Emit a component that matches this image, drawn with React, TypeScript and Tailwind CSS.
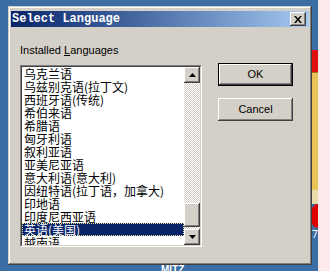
import React from "react";

const items = [
  "乌克兰语",
  "乌兹别克语(拉丁文)",
  "西班牙语(传统)",
  "希伯来语",
  "希腊语",
  "匈牙利语",
  "叙利亚语",
  "亚美尼亚语",
  "意大利语(意大利)",
  "因纽特语(拉丁语，加拿大)",
  "印地语",
  "印度尼西亚语",
  "英语(美国)",
  "越南语",
];

const raised =
  "shadow-[inset_-1px_-1px_#404040,inset_1px_1px_#ffffff,inset_-2px_-2px_#808080,inset_2px_2px_#d4d0c8]";

function Arrow({ up }: { up: boolean }) {
  return (
    <svg width="7" height="4" viewBox="0 0 7 4">
      {up ? <path d="M3.5 0 L7 4 L0 4 Z" fill="#000" /> : <path d="M0 0 L7 0 L3.5 4 Z" fill="#000" />}
    </svg>
  );
}

export default function App() {
  return (
    <div className="w-[330px] h-[271px] flex bg-[#3a6ea5] overflow-hidden">
      <div className="w-[8px] shrink-0" />
      <div className="w-[304px] shrink-0 flex flex-col">
        <div className="h-[6px] shrink-0" />
        <div className="h-[259px] shrink-0 bg-[#d4d0c8] shadow-[inset_-1px_-1px_#404040,inset_1px_1px_#d4d0c8,inset_-2px_-2px_#808080,inset_2px_2px_#ffffff] pt-[5px] px-[3px] flex flex-col">
          <div className="h-[16px] flex items-center justify-between bg-gradient-to-r from-[#0a246a] to-[#a6caf0]">
            <span
              className="pl-[1px] text-white font-bold text-[12px] leading-[16px]"
              style={{ fontFamily: '"Liberation Mono", "DejaVu Sans Mono", monospace' }}
            >
              Select Language
            </span>
            <div className={`mr-[3px] w-[16px] h-[14px] bg-[#d4d0c8] ${raised} flex items-center justify-center`}>
              <svg width="8" height="7" viewBox="0 0 8 7">
                <path d="M0 0 L2 0 L4 2.5 L6 0 L8 0 L5 3.5 L8 7 L6 7 L4 4.5 L2 7 L0 7 L3 3.5 Z" fill="#000" />
              </svg>
            </div>
          </div>
          <div className="flex">
            <div className="ml-[9px] flex flex-col">
              <div
                className="mt-[17px] h-[13px] text-[11px] leading-[13px] text-black"
                style={{ fontFamily: '"Liberation Sans", Arial, sans-serif' }}
              >
                Installed <span className="underline">L</span>anguages
              </div>
              <div className="mt-[8px] w-[182px] h-[182px] border border-t-[#808080] border-l-[#808080] border-b-white border-r-white">
                <div className="w-full h-full border border-t-[#404040] border-l-[#404040] border-b-[#d4d0c8] border-r-[#d4d0c8] bg-white flex">
                  <div
                    className="flex-1 overflow-hidden flex flex-col text-[12px] leading-[13px] text-black"
                    style={{ fontFamily: '"Noto Sans CJK SC", "DejaVu Sans", sans-serif' }}
                  >
                    {items.map((it, i) =>
                      i === 12 ? (
                        <div
                          key={i}
                          className="h-[13px] shrink-0 bg-[#0a246a] text-white pl-[2px] outline-1 outline-dotted outline-[#e8e0a0] -outline-offset-1 whitespace-nowrap"
                        >
                          {it}
                        </div>
                      ) : (
                        <div key={i} className="h-[13px] shrink-0 pl-[2px] whitespace-nowrap">
                          {it}
                        </div>
                      )
                    )}
                  </div>
                  <div className="w-[16px] shrink-0 flex flex-col bg-[repeating-conic-gradient(#ffffff_0_25%,#d4d0c8_0_50%)] bg-[length:2px_2px]">
                    <div className={`h-[16px] shrink-0 bg-[#d4d0c8] ${raised} flex items-center justify-center`}>
                      <Arrow up />
                    </div>
                    <div className="h-[120px] shrink-0" />
                    <div className={`h-[24px] shrink-0 bg-[#d4d0c8] ${raised}`} />
                    <div className="flex-1" />
                    <div className={`h-[16px] shrink-0 bg-[#d4d0c8] ${raised} flex items-center justify-center`}>
                      <Arrow up={false} />
                    </div>
                  </div>
                </div>
              </div>
            </div>
            <div
              className="ml-[16px] mt-[36px] flex flex-col gap-[12px] text-[11px] text-black"
              style={{ fontFamily: '"Liberation Sans", Arial, sans-serif' }}
            >
              <div className="w-[75px] h-[23px] bg-[#d4d0c8] shadow-[inset_-1px_-1px_#000000,inset_1px_1px_#000000,inset_-2px_-2px_#404040,inset_2px_2px_#ffffff,inset_-3px_-3px_#808080] flex items-center justify-center">
                OK
              </div>
              <div className={`w-[75px] h-[23px] bg-[#d4d0c8] ${raised} flex items-center justify-center`}>
                Cancel
              </div>
            </div>
          </div>
        </div>
        <div className="h-[6px] shrink-0 overflow-hidden">
          <span
            className="block ml-[153px] text-white text-[10px] leading-[10px] font-bold"
            style={{ fontFamily: '"Liberation Sans", Arial, sans-serif' }}
          >
            MITZ
          </span>
        </div>
      </div>
      <div className="w-[6px] shrink-0 flex flex-col">
        <div className="h-[50px] shrink-0 bg-[#3a6ea5]" />
        <div className="h-[22px] shrink-0 bg-[#e01010]" />
        <div className="h-[118px] shrink-0 bg-[#e8c458] border-t border-[#a07820]" />
        <div className="h-[14px] shrink-0 bg-[#eadcaa]" />
        <div className="h-[24px] shrink-0 bg-[#e00000] rounded-l-full" />
        <div className="flex-1 bg-[#3a6ea5] text-white text-[10px] leading-[12px] overflow-hidden">7</div>
      </div>
      <div className="flex-1 bg-[#fce9e9]" />
    </div>
  );
}
